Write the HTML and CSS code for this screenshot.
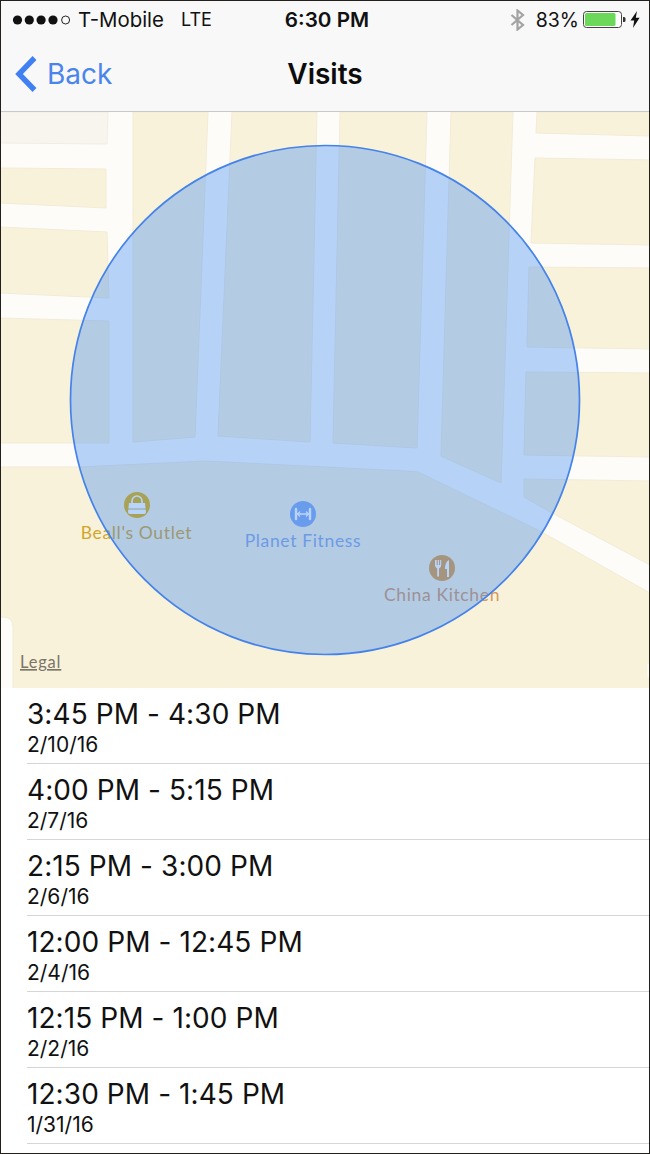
FILE: index.html
```html
<!DOCTYPE html>
<html lang="en">
<head>
<meta charset="utf-8">
<title>Visits</title>
<link rel="stylesheet" href="styles.css">
</head>
<body>
<div class="frame">
  <header class="header">
    <div class="status">
      <div class="status-left">
        <svg class="signal" viewBox="0 0 60 12" width="60" height="12" aria-hidden="true">
          <circle cx="5.5" cy="6" r="4.6" fill="#111"/>
          <circle cx="17.3" cy="6" r="4.6" fill="#111"/>
          <circle cx="29.1" cy="6" r="4.6" fill="#111"/>
          <circle cx="41" cy="6" r="4.6" fill="#111"/>
          <circle cx="53.6" cy="6" r="4" fill="none" stroke="#222" stroke-width="1"/>
        </svg>
        <span class="carrier">T-Mobile</span>
        <span class="network">LTE</span>
      </div>
      <div class="status-time">6:30 PM</div>
      <div class="status-right">
        <svg class="bt" viewBox="0 0 15 22" width="15" height="22" aria-hidden="true">
          <path d="M1.5 6 L13 16 L7.5 20.5 V1.5 L13 6 L1.5 16" fill="none" stroke="#a3a3a3" stroke-width="2.2"/>
        </svg>
        <span class="battery-pct">83%</span>
        <svg class="battery" viewBox="0 0 43 18" width="43" height="18" aria-hidden="true">
          <rect x="0.5" y="0.5" width="38" height="16" rx="3" fill="#fff" stroke="#444"/>
          <rect x="2" y="2" width="30.5" height="13" rx="1.5" fill="#6cd85a"/>
          <path d="M40 6 h1 a1.5 1.5 0 0 1 1.5 1.5 v2 a1.5 1.5 0 0 1 -1.5 1.5 h-1 z" fill="#333"/>
        </svg>
        <svg class="bolt" viewBox="0 0 10 17" width="10" height="17" aria-hidden="true">
          <path d="M7 0 L0.5 9.5 H4.2 L3 17 L9.6 6.8 H5.8 Z" fill="#111"/>
        </svg>
      </div>
    </div>
    <nav class="nav">
      <div class="back">
        <svg class="chevron" viewBox="0 0 24 38" width="24" height="38" aria-hidden="true">
          <path d="M21.500 3 L6 19 L21.500 35" fill="none" stroke="#4080f2" stroke-width="5.4"/>
        </svg>
        <span class="back-label">Back</span>
      </div>
      <h1 class="nav-title">Visits</h1>
      <div class="nav-spacer"></div>
    </nav>
  </header>

  <svg class="map" viewBox="1 112 648 576" width="648" height="576">
    <rect class="road-bg" x="1" y="112" width="648" height="576"/>
    <polygon class="block-grey" points="0,112 108,112 107,144 0,143"/>
    <polygon class="block" points="0,168 106,169 106,208 0,203"/>
    <polygon class="block" points="0,227 107,232 109,298 0,293"/>
    <polygon class="block" points="0,318 109,321 109,443 0,443"/>
    <polygon class="block" points="133,112 208,112 195,437 133,442"/>
    <polygon class="block" points="232,112 317,112 310,442 218,436"/>
    <polygon class="block" points="340,112 427,112 417,448 333,443"/>
    <polygon class="block" points="451,112 513,112 501,483 441,456"/>
    <polygon class="block" points="537,112 650,112 650,136 536,133"/>
    <polygon class="block" points="535,158 650,160 650,245 531,243"/>
    <polygon class="block" points="529,267 650,268 650,349 527,347"/>
    <polygon class="block" points="526,372 650,373 650,457 524,455"/>
    <polygon class="block" points="524,479 650,481 650,565 552,513 524,497"/>
    <path class="block" d="M0 467 H80 L205 461 L325 467 L405 471 L418 472 L540 531 L650 593 V690 H13 V627 Q13 617 3 617 H0 Z"/>
    <rect class="road-bg" x="647.500" y="664" width="2" height="13"/>

    <circle cx="137" cy="505" r="13" fill="#e7b200"/>
    <path d="M129 503 h16 l1 9 q0 2 -2 2 h-14 q-2 0 -2 -2 z" fill="#fff"/>
    <path d="M132 503 v-2 a5 5 0 0 1 10 0 v2" fill="none" stroke="#fff" stroke-width="1.6"/>
    <path d="M128 509 h18" stroke="#c5b54a" stroke-width="1"/>
    <text class="label label-gold" x="136.500" y="539">Beall's Outlet</text>

    <circle cx="303" cy="514" r="13" fill="#87a9ea"/>
    <path d="M297 514 h12" stroke="#fff" stroke-width="1.6"/>
    <path d="M296 509 v10 M310 509 v10" stroke="#fff" stroke-width="2.4" stroke-linecap="round"/>
    <path d="M300 511.500 l-2.500 2.500 l2.500 2.500 M306 511.500 l2.500 2.500 l-2.500 2.500" fill="none" stroke="#fff" stroke-width="1.2"/>
    <text class="label label-blue" x="303" y="547">Planet Fitness</text>

    <circle cx="442" cy="568" r="13" fill="#e29e3f"/>
    <path d="M435 560 v5 q0 3 2.200 3.500 v8 h1.800 v-8 q2.200 -0.500 2.200 -3.500 v-5 h-1.100 v5 h-1 v-5 h-1.400 v5 h-1 v-5 z" fill="#fff"/>
    <path d="M449 560 q-4 2 -4 9 h2 v8 h2 z" fill="#fff"/>
    <text class="label label-orange" x="442" y="601">China Kitchen</text>

    <text class="legal" x="20" y="668">Legal</text>

    <circle class="radius" cx="325" cy="400" r="254.500"/>
  </svg>

  <ul class="visits">
    <li class="visit"><div class="visit-time">3:45 PM - 4:30 PM</div><div class="visit-date">2/10/16</div></li>
    <li class="visit"><div class="visit-time">4:00 PM - 5:15 PM</div><div class="visit-date">2/7/16</div></li>
    <li class="visit"><div class="visit-time">2:15 PM - 3:00 PM</div><div class="visit-date">2/6/16</div></li>
    <li class="visit"><div class="visit-time">12:00 PM - 12:45 PM</div><div class="visit-date">2/4/16</div></li>
    <li class="visit"><div class="visit-time">12:15 PM - 1:00 PM</div><div class="visit-date">2/2/16</div></li>
    <li class="visit"><div class="visit-time">12:30 PM - 1:45 PM</div><div class="visit-date">1/31/16</div></li>
  </ul>
</div>
</body>
</html>
```
FILE: styles.css
```css
* { box-sizing: border-box; }
html, body { margin: 0; padding: 0; background: #fff; }
body { font-family: Inter, "Liberation Sans", sans-serif; color: #111; }

.frame {
  width: 650px;
  height: 1154px;
  border: 1px solid #231f1c;
  overflow: hidden;
  display: flex;
  flex-direction: column;
  background: #fff;
}

.header {
  height: 111px;
  flex: none;
  background: #f8f8f8;
  border-bottom: 1px solid #c9c9c9;
  display: flex;
  flex-direction: column;
}

.status {
  height: 36px;
  padding: 1px 9px 0 11px;
  display: grid;
  grid-template-columns: 1fr auto 1fr;
  align-items: center;
  font-size: 20.4px;
}
.status-left, .status-right { display: flex; align-items: center; }
.status-right { justify-content: flex-end; }
.signal { margin-right: 6px; }
.network { margin-left: 17px; font-size: 18px; }
.status-time { font-weight: 600; font-size: 20.7px; margin-left: 2px; }
.bt { margin-right: 11px; }
.battery-pct { margin-right: 4px; font-size: 19.5px; }
.battery { margin-right: 4px; }

.nav {
  flex: 1;
  display: grid;
  grid-template-columns: 1fr auto 1fr;
  align-items: center;
}
.back { display: flex; align-items: center; gap: 10px; padding-left: 12px; }
.chevron { flex: none; }
.back-label { font-size: 28px; color: #4a85ec; }
.nav-title { margin: 0; font-size: 28px; font-weight: 600; color: #0c0c0c; }

.map { display: block; flex: none; }
.road-bg { fill: #fdfcf8; }
.block { fill: #f9f2da; stroke: #f1ebd8; stroke-width: 1; }
.block-grey { fill: #f7f5ee; stroke: #f0ede3; stroke-width: 1; }
.radius { fill: rgba(51, 131, 245, 0.35); stroke: #4483ea; stroke-width: 1.7; }

.label {
  font-family: Lato, "Noto Sans", sans-serif;
  font-size: 17.5px;
  letter-spacing: 0.65px;
  text-anchor: middle;
}
.label-gold { fill: #d3a52b; }
.label-blue { fill: #8ca7dc; }
.label-orange { fill: #d69860; }
.legal {
  font-family: Lato, "Noto Sans", sans-serif;
  font-size: 16.5px;
  letter-spacing: 0.8px;
  fill: #7b7568;
  text-decoration: underline;
}

.visits { list-style: none; margin: 0; padding: 0 0 0 26px; flex: 1; }
.visit {
  height: 76px;
  border-bottom: 1px solid #d6d6d6;
  padding-top: 9px;
}
.visit-time { font-size: 28px; line-height: 34px; letter-spacing: 0.08px; }
.visit-date { font-size: 21px; line-height: 24px; margin-top: 2px; }
```
